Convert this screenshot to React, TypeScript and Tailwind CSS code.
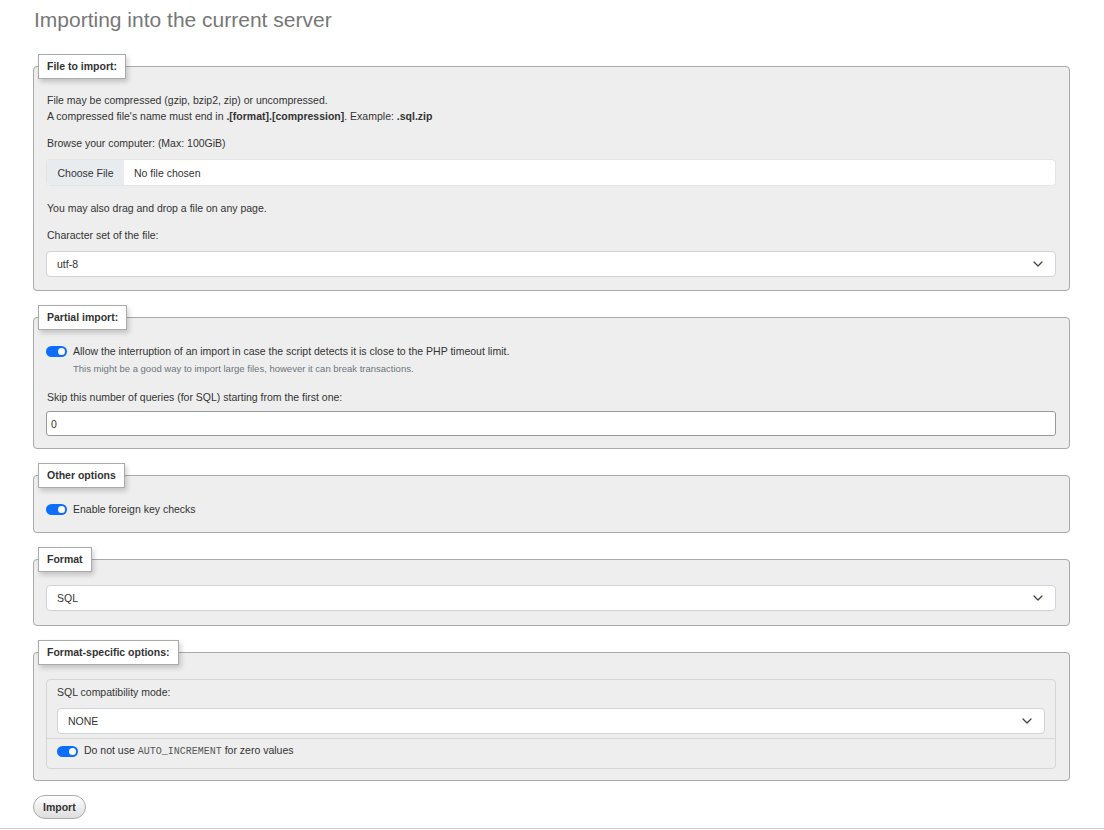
import React from 'react'

function Toggle() {
  return (
    <span className="inline-flex h-[11px] w-[21px] shrink-0 items-center justify-end rounded-full bg-[#0d6efd] pr-[2px]">
      <span className="h-[7px] w-[7px] rounded-full bg-white" />
    </span>
  )
}

function Chevron() {
  return (
    <svg width="10" height="6" viewBox="0 0 10 6" fill="none" className="text-[#444]">
      <path d="M1 1l4 4 4-4" stroke="currentColor" strokeWidth="1.3" strokeLinecap="round" strokeLinejoin="round" />
    </svg>
  )
}

function Select({ value }: { value: string }) {
  return (
    <div className="flex h-[26px] items-center justify-between rounded-[4px] border border-[#ced4da] bg-white pl-[10px] pr-[12px]">
      <span>{value}</span>
      <Chevron />
    </div>
  )
}

function Box({ title, children, pb = 'pb-[12px]', pt = 'pt-[13px]' }: { title: string; children: React.ReactNode; pb?: string; pt?: string }) {
  return (
    <fieldset className="mb-[14px] rounded-[4px] border border-[#aaa] bg-[#eee]">
      <legend className="ml-[4px] border border-[#aaa] bg-white px-[8px] py-[4px] font-bold leading-[15px] text-[#333] shadow-[2px_3px_5px_rgba(0,0,0,0.18)]">
        {title}
      </legend>
      <div className={`pl-[13px] pr-[13px] ${pt} ${pb}`}>{children}</div>
    </fieldset>
  )
}

export default function App() {
  return (
    <div className="min-h-[830px] bg-white font-['Liberation_Sans',Arial,sans-serif] text-[10.5px] leading-[16px] text-[#333]">
      <div className="pl-[33px] pr-[34px]">
        <h2 className="pt-[7px] pl-[1px] text-[21px] leading-[25px] text-[#777]">Importing into the current server</h2>

        <div className="mt-[22px]">
          <Box title="File to import:" pb="pb-[13px]">
            <p>File may be compressed (gzip, bzip2, zip) or uncompressed.</p>
            <p>
              A compressed file's name must end in <b>.[format].[compression]</b>. Example: <b>.sql.zip</b>
            </p>
            <p className="mt-[11px]">Browse your computer: (Max: 100GiB)</p>
            <div className="-ml-px mt-[8px] flex h-[27px] items-stretch overflow-hidden rounded-[4px] border border-[#e4e4e4] bg-white">
              <span className="flex w-[77px] items-center justify-center bg-[#e9ecef]">Choose File</span>
              <span className="flex items-center pl-[10px]">No file chosen</span>
            </div>
            <p className="mt-[14px]">You may also drag and drop a file on any page.</p>
            <p className="mt-[11px]">Character set of the file:</p>
            <div className="-ml-px mt-[8px]">
              <Select value="utf-8" />
            </div>
          </Box>

          <Box title="Partial import:" pb="pb-[12px]">
            <div className="-ml-px flex items-center gap-[6px]">
              <Toggle />
              <span>Allow the interruption of an import in case the script detects it is close to the PHP timeout limit.</span>
            </div>
            <p className="mt-[2px] pl-[26px] text-[9.5px] text-[#6c757d]">
              This might be a good way to import large files, however it can break transactions.
            </p>
            <p className="mt-[12px]">Skip this number of queries (for SQL) starting from the first one:</p>
            <div className="-ml-px mt-[6px] flex h-[25px] items-center rounded-[3px] border border-[#999] bg-white pl-[4px]">0</div>
          </Box>

          <Box title="Other options" pb="pb-[15px]">
            <div className="-ml-px flex items-center gap-[6px]">
              <Toggle />
              <span>Enable foreign key checks</span>
            </div>
          </Box>

          <Box title="Format" pb="pb-[14px]">
            <div className="-ml-px">
              <Select value="SQL" />
            </div>
          </Box>

          <Box title="Format-specific options:" pt="pt-[14px]" pb="pb-[11px]">
            <div className="-ml-px rounded-[4px] border border-[#d6d6d6]">
              <div className="px-[10px] pb-[4px] pt-[4px]">
                <p>SQL compatibility mode:</p>
                <div className="mt-[8px]">
                  <Select value="NONE" />
                </div>
              </div>
              <div className="flex items-center gap-[6px] border-t border-[#d6d6d6] px-[10px] pb-[8px] pt-[3px]">
                <Toggle />
                <span>
                  Do not use <code className="font-['Liberation_Mono',monospace] text-[10px] text-[#555]">AUTO_INCREMENT</code> for zero values
                </span>
              </div>
            </div>
          </Box>

          <button className="h-[24px] rounded-full border border-[#aaa] bg-gradient-to-b from-white to-[#ddd] px-[9px] font-bold text-[#333]">
            Import
          </button>
        </div>
      </div>
      <div className="mt-[9px] border-t border-[#ccc]" />
    </div>
  )
}
